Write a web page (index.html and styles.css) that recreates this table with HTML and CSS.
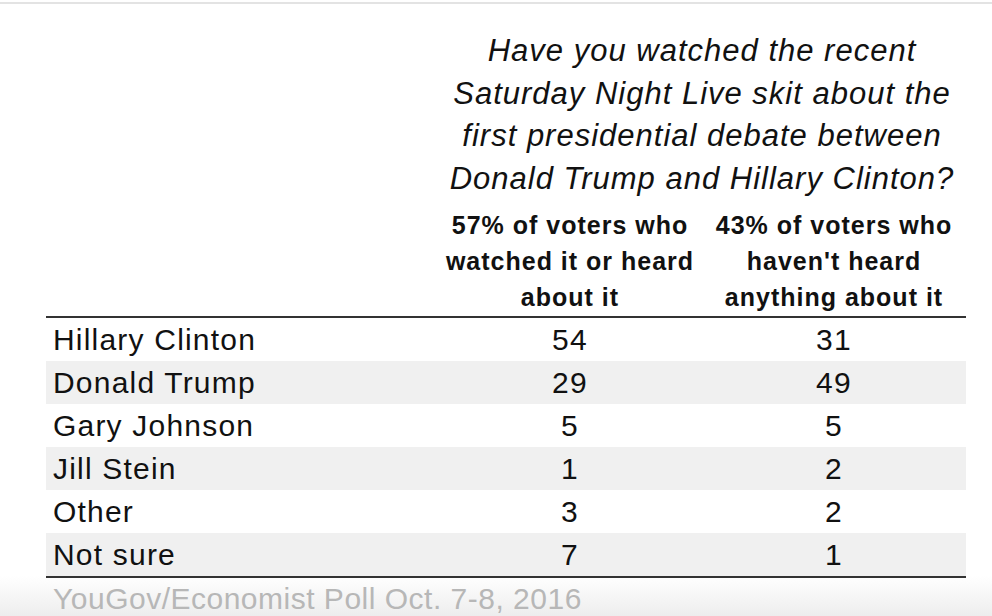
FILE: index.html
```html
<!DOCTYPE html>
<html lang="en">
<head>
<meta charset="utf-8">
<title>YouGov/Economist Poll</title>
<link rel="stylesheet" href="styles.css">
</head>
<body>
<div class="page">
  <div class="topbar"></div>
  <div class="poll">
    <div class="head">
      <div class="question">Have you watched the recent<br>Saturday Night Live skit about the<br>first presidential debate between<br>Donald Trump and Hillary Clinton?</div>
      <div class="col-label col-a">57% of voters who<br>watched it or heard<br>about it</div>
      <div class="col-label col-b">43% of voters who<br>haven't heard<br>anything about it</div>
    </div>
    <div class="rows">
      <div class="row"><span class="name">Hillary Clinton</span><span class="num">54</span><span class="num">31</span></div>
      <div class="row"><span class="name">Donald Trump</span><span class="num">29</span><span class="num">49</span></div>
      <div class="row"><span class="name">Gary Johnson</span><span class="num">5</span><span class="num">5</span></div>
      <div class="row"><span class="name">Jill Stein</span><span class="num">1</span><span class="num">2</span></div>
      <div class="row"><span class="name">Other</span><span class="num">3</span><span class="num">2</span></div>
      <div class="row"><span class="name">Not sure</span><span class="num">7</span><span class="num">1</span></div>
    </div>
    <div class="source">YouGov/Economist Poll Oct. 7-8, 2016</div>
  </div>
</div>
</body>
</html>
```
FILE: styles.css
```css
* { box-sizing: border-box; }
html, body { margin: 0; padding: 0; }
body {
  font-family: "Liberation Sans", Arial, sans-serif;
  color: #111;
  background: #fff;
}
.page {
  width: 992px;
  height: 616px;
  overflow: hidden;
  background: linear-gradient(to bottom, #fff 0, #fff 576px, #ededed 616px);
}
.topbar {
  height: 4px;
  border-top: 2px solid #fff;
  background: #e3e3e3;
}
.poll {
  margin-left: 46px;
  width: 920px;
}
.head {
  display: grid;
  grid-template-columns: 392px 264px 264px;
  padding-top: 26px;
  border-bottom: 2px solid #333;
}
.question {
  grid-column: 2 / span 2;
  text-align: center;
  font-style: italic;
  font-size: 31px;
  letter-spacing: 1px;
  line-height: 42.5px;
  white-space: nowrap;
}
.col-label {
  grid-row: 2;
  margin-top: 7px;
  padding-bottom: 1px;
  text-align: center;
  font-weight: bold;
  font-size: 25px;
  letter-spacing: 1px;
  line-height: 36px;
  white-space: nowrap;
}
.col-a { grid-column: 2; }
.col-b { grid-column: 3; }
.rows { border-bottom: 2px solid #333; }
.row {
  display: grid;
  grid-template-columns: 392px 264px 264px;
  height: 43px;
  font-size: 30px;
  line-height: 43px;
  letter-spacing: 1.2px;
}
.row:nth-child(even) { background: #f0f0f0; }
.name { padding-left: 7px; white-space: nowrap; }
.num { text-align: center; }
.source {
  padding-left: 7px;
  padding-top: 3px;
  font-size: 30px;
  letter-spacing: 0.5px;
  line-height: 36px;
  color: #b7b7b7;
  white-space: nowrap;
}
```
